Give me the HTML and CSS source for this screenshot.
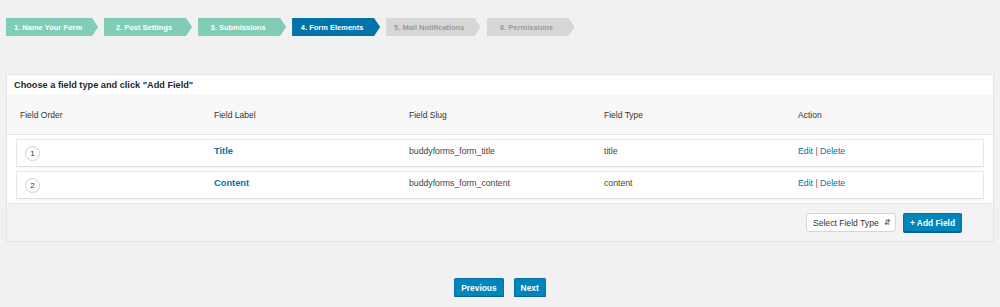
FILE: index.html
```html
<!DOCTYPE html>
<html>
<head>
<meta charset="utf-8">
<link rel="stylesheet" href="styles.css">
</head>
<body>
<div class="wizard">
  <div class="steps">
    <div class="step done">1. Name Your Form</div>
    <div class="step done">2. Post Settings</div>
    <div class="step done">3. Submissions</div>
    <div class="step current">4. Form Elements</div>
    <div class="step todo">5. Mail Notifications</div>
    <div class="step todo">6. Permissions</div>
  </div>

  <div class="panel">
    <div class="panel-title">Choose a field type and click "Add Field"</div>
    <div class="thead">
      <div>Field Order</div>
      <div>Field Label</div>
      <div>Field Slug</div>
      <div>Field Type</div>
      <div>Action</div>
    </div>
    <div class="rows">
      <div class="row">
        <div class="order"><span class="num">1</span></div>
        <div class="label"><a href="#">Title</a></div>
        <div class="cell">buddyforms_form_title</div>
        <div class="cell">title</div>
        <div class="cell actions"><a href="#">Edit</a> | <a href="#">Delete</a></div>
      </div>
      <div class="row">
        <div class="order"><span class="num">2</span></div>
        <div class="label"><a href="#">Content</a></div>
        <div class="cell">buddyforms_form_content</div>
        <div class="cell">content</div>
        <div class="cell actions"><a href="#">Edit</a> | <a href="#">Delete</a></div>
      </div>
    </div>
    <div class="panel-foot">
      <div class="select">Select Field Type <span class="arrows">&#8693;</span></div>
      <button class="btn">+ Add Field</button>
    </div>
  </div>

  <div class="nav">
    <button class="btn">Previous</button>
    <button class="btn">Next</button>
  </div>
</div>
</body>
</html>
```

FILE: styles.css
```css
html, body {
  margin: 0;
  background: #f1f1f1;
  font-family: "Liberation Sans", Arial, sans-serif;
  color: #444;
}

.wizard {
  padding: 18px 6px 0 6px;
}

.steps {
  display: flex;
  gap: 6px;
}

.step {
  height: 18px;
  min-width: 64px;
  padding: 0 16px 0 8px;
  display: flex;
  align-items: center;
  justify-content: center;
  font-size: 7.5px;
  font-weight: bold;
  white-space: nowrap;
  clip-path: polygon(0 0, calc(100% - 6px) 0, 100% 50%, calc(100% - 6px) 100%, 0 100%);
}

.step.done {
  background: #80ccb6;
  color: #fff;
}

.step.current {
  background: #0073aa;
  color: #fff;
}

.step.todo {
  background: #d7d7d7;
  color: #9a9a9a;
}

.panel {
  margin-top: 38px;
  background: #fff;
  border: 1px solid #e3e3e3;
}

.panel-title {
  height: 20px;
  display: flex;
  align-items: center;
  padding-left: 7px;
  font-size: 9.2px;
  font-weight: bold;
  color: #23282d;
}

.thead {
  display: grid;
  grid-template-columns: 194px 195px 195px 194px 1fr;
  align-items: center;
  height: 39px;
  padding-left: 13px;
  background: #f8f8f8;
  border-bottom: 1px solid #e6e6e6;
  font-size: 8.5px;
  color: #333;
}

.rows {
  display: flex;
  flex-direction: column;
  gap: 4px;
  padding: 4px 9px 4px 9px;
}

.row {
  display: grid;
  grid-template-columns: 197px 195px 195px 194px 1fr;
  height: 26px;
  border: 1px solid #e8e8e8;
  border-bottom-color: #e0e0e0;
  background: #fff;
  box-shadow: 0 1px 1px rgba(0, 0, 0, 0.03);
  font-size: 8.7px;
  color: #444;
}

.row > div {
  padding-top: 6px;
}

.row > .order {
  padding-top: 6px;
  padding-left: 8px;
}

.num {
  display: flex;
  align-items: center;
  justify-content: center;
  width: 13px;
  height: 13px;
  border: 1px solid #cfcfcf;
  border-radius: 50%;
  font-size: 8px;
  color: #333;
}

.label a {
  color: #0073aa;
  font-weight: bold;
  font-size: 9.3px;
  text-decoration: none;
}

.actions {
  color: #555;
}

.actions a {
  color: #0073aa;
  text-decoration: none;
}

.panel-foot {
  display: flex;
  justify-content: flex-end;
  align-items: center;
  gap: 7px;
  height: 37px;
  padding-right: 31px;
  background: #f3f3f3;
  border-top: 1px solid #e3e3e3;
}

.select {
  box-sizing: border-box;
  width: 90px;
  height: 19px;
  display: flex;
  align-items: center;
  justify-content: space-between;
  padding: 0 4px 0 6px;
  background: #fff;
  border: 1px solid #d6d6d6;
  border-radius: 3px;
  font-size: 8.6px;
  color: #333;
}

.arrows {
  font-size: 8px;
  color: #555;
}

.btn {
  height: 19px;
  padding: 0 6px;
  background: #0085ba;
  border: 1px solid #0073aa;
  border-bottom-color: #006799;
  border-radius: 2px;
  color: #fff;
  font-family: "Liberation Sans", Arial, sans-serif;
  font-size: 8.4px;
  font-weight: bold;
  box-shadow: 0 1px 0 #006799;
}

.nav {
  display: flex;
  justify-content: center;
  gap: 10px;
  margin-top: 36px;
}
```
